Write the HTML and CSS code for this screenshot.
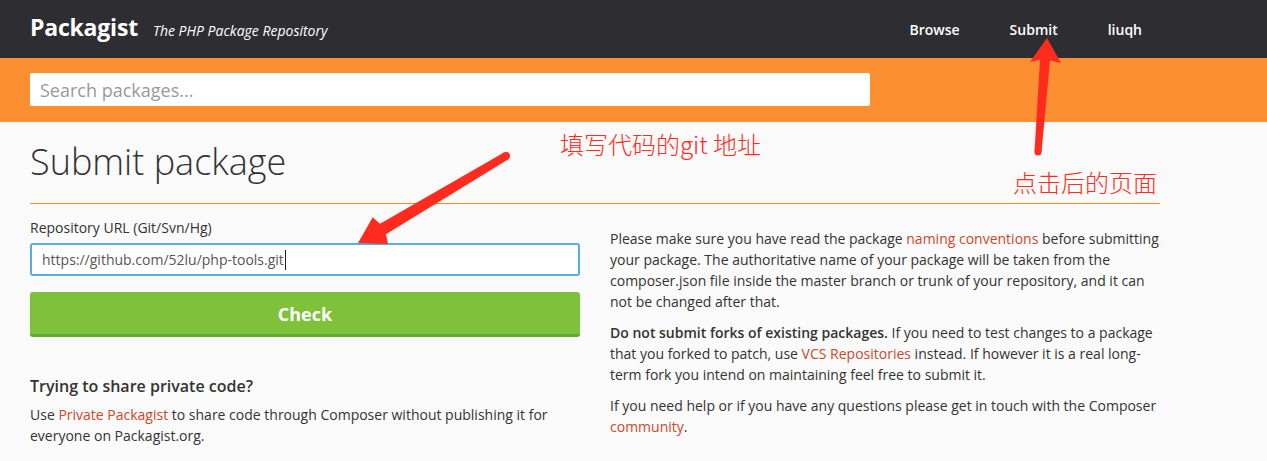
FILE: index.html
```html
<!DOCTYPE html>
<html lang="en">
<head>
<meta charset="utf-8">
<title>Submit package - Packagist</title>
<link rel="stylesheet" href="styles.css">
</head>
<body>
<header class="navbar">
  <div class="nav-inner">
    <div class="brand">
      <a class="logo" href="#">Packagist</a>
      <em class="tagline">The PHP Package Repository</em>
    </div>
    <nav class="nav-links">
      <a href="#">Browse</a>
      <a href="#">Submit</a>
      <a href="#">liuqh</a>
    </nav>
  </div>
</header>
<div class="search-band">
  <div class="search-box">Search packages...</div>
</div>
<main class="content">
  <div class="page-head">
    <h1>Submit package</h1>
  </div>
  <div class="columns">
    <section class="form-col">
      <label class="field-label">Repository URL (Git/Svn/Hg)</label>
      <div class="url-input"><span>https://github.com/52lu/php-tools.git</span><span class="caret"></span></div>
      <button class="check-btn">Check</button>
      <h4 class="private-title">Trying to share private code?</h4>
      <p class="private-text">Use <a href="#">Private Packagist</a> to share code through Composer without publishing it for everyone on Packagist.org.</p>
    </section>
    <section class="info-col">
      <p>Please make sure you have read the package <a href="#">naming conventions</a> before submitting your package. The authoritative name of your package will be taken from the composer.json file inside the master branch or trunk of your repository, and it can not be changed after that.</p>
      <p><strong>Do not submit forks of existing packages.</strong> If you need to test changes to a package that you forked to patch, use <a href="#">VCS Repositories</a> instead. If however it is a real long-term fork you intend on maintaining feel free to submit it.</p>
      <p>If you need help or if you have any questions please get in touch with the Composer <a href="#">community</a>.</p>
    </section>
  </div>
</main>
<div class="annotations">
  <svg class="arrows" width="1267" height="461" viewBox="0 0 1267 461">
    <polygon points="358,243 372.7,217.3 380,223.8 504,152.6 508,159.4 386,234.2 388,244" fill="#ff2b1f"/>
    <circle cx="506" cy="156" r="4" fill="#ff2b1f"/>
    <polygon points="1047,38 1061,63 1050,60.4 1041.5,152.3 1034.5,151.7 1040,59.6 1030,62" fill="#ff2b1f"/>
    <circle cx="1038" cy="152" r="3.5" fill="#ff2b1f"/>
  </svg>
  <span class="note note-git">填写代码的git 地址</span>
  <span class="note note-page">点击后的页面</span>
</div>
</body>
</html>
```
FILE: styles.css
```css
* { box-sizing: border-box; }
html, body { margin: 0; padding: 0; }
body {
  font-family: "Open Sans", "Noto Sans", sans-serif;
  font-size: 14px;
  line-height: 21px;
  color: #333;
  background: #fafafa;
  position: relative;
  width: 1267px;
  height: 461px;
  overflow: hidden;
}
a { color: #c8492a; text-decoration: none; }

.navbar {
  background: #2e2e32;
  height: 58px;
}
.nav-inner {
  display: flex;
  align-items: center;
  justify-content: space-between;
  height: 58px;
  padding-left: 30px;
  width: 1167px;
}
.brand { display: flex; align-items: baseline; }
.logo {
  color: #fff;
  font-weight: 700;
  font-size: 23px;
  letter-spacing: -0.2px;
}
.tagline {
  color: #fff;
  font-size: 14px;
  margin-left: 15px;
}
.nav-links { display: flex; }
.nav-links a {
  color: #fff;
  font-weight: 600;
  font-size: 14px;
  padding: 0 25px;
}

.search-band {
  background: #fb8f32;
  height: 64px;
  padding: 15px 0 0 30px;
}
.search-box {
  width: 840px;
  height: 33px;
  background: #fff;
  border-radius: 2px;
  color: #999;
  font-size: 18px;
  line-height: 35px;
  padding-left: 10px;
}

.content { padding-left: 30px; width: 1160px; }
.page-head { border-bottom: 1px solid #f28d1a; }
h1 {
  margin: 20px 0 21px;
  font-size: 36px;
  font-weight: 300;
  line-height: 40px;
  color: #333;
}
.columns {
  display: grid;
  grid-template-columns: 550px 550px;
  column-gap: 30px;
}
.field-label {
  display: block;
  margin-top: 14px;
  line-height: 20px;
  color: #333;
}
.url-input {
  margin-top: 5px;
  height: 33px;
  border: 2px solid #5aabe3;
  border-radius: 3px;
  background: #fff;
  padding-left: 10px;
  line-height: 29px;
  color: #555;
  display: flex;
  align-items: center;
}
.caret {
  display: inline-block;
  width: 1px;
  height: 20px;
  background: #222;
  margin-left: 1px;
}
.check-btn {
  display: block;
  width: 100%;
  margin-top: 16px;
  height: 45px;
  border: 0;
  border-bottom: 3px solid #5fa92f;
  border-radius: 3px;
  background: #7fc13a;
  color: #fff;
  font-family: "Open Sans", sans-serif;
  font-weight: 700;
  font-size: 18px;
  padding: 1px 0 0;
}
.private-title {
  margin: 38px 0 7px;
  font-size: 16px;
  font-weight: 600;
  line-height: 22px;
}
.private-text { margin: 0; }
.info-col { padding-top: 24px; }
.info-col p { margin: 0 0 10px; }
.info-col strong { font-weight: 600; }

.annotations {
  position: absolute;
  top: 0;
  left: 0;
  width: 1267px;
  height: 461px;
  pointer-events: none;
}
.arrows { position: absolute; top: 0; left: 0; }
.note {
  position: absolute;
  font-family: "Noto Sans CJK SC", sans-serif;
  font-weight: 300;
  font-size: 24px;
  line-height: 28px;
  color: #ff2b1f;
  white-space: nowrap;
}
.note-git { left: 560px; top: 130px; }
.note-page { left: 1013px; top: 168px; }
```
